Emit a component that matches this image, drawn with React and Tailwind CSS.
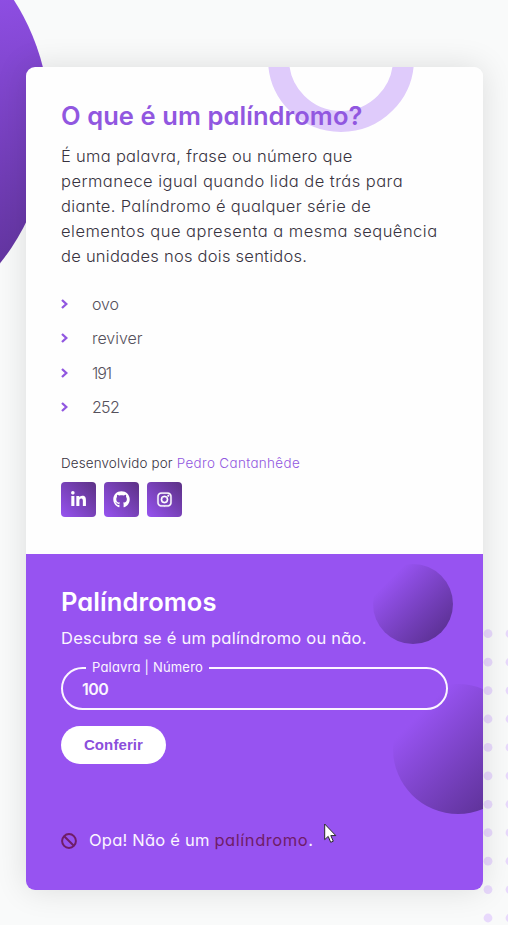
import { BiLogoInstagram } from "react-icons/bi";
import { FaGithub, FaLinkedinIn } from "react-icons/fa";

const examples = [
  { text: "ovo", tracking: "tracking-[-0.1px]" },
  { text: "reviver", tracking: "tracking-[-0.05px]" },
  { text: "191", tracking: "tracking-[-1.1px]" },
  { text: "252", tracking: "tracking-[-0.7px]" },
];

const dotRows = Array.from({ length: 11 }, (_, i) => 633.7 + i * 28.43);

function Backdrop() {
  return (
    <svg className="absolute inset-0" width="508" height="925" aria-hidden="true">
      <defs>
        <linearGradient id="orb" x1="0" y1="-60" x2="60" y2="300" gradientUnits="userSpaceOnUse">
          <stop offset="0" stopColor="#9753f1" />
          <stop offset="1" stopColor="#5c3195" />
        </linearGradient>
      </defs>
      <circle cx="-176" cy="122" r="225.7" fill="url(#orb)" />
      {dotRows.map((y) => (
        <g key={y} fill="#e8d9fc">
          <circle cx="488" cy={y} r="4.4" />
          <circle cx="510" cy={y} r="4.4" />
        </g>
      ))}
    </svg>
  );
}

function Chevron() {
  return (
    <svg className="mr-[24px]" width="7" height="10" viewBox="0 0 7 10" fill="none" stroke="#9157e0" strokeWidth="2.3">
      <path d="M1 1l4.3 4L1 9" />
    </svg>
  );
}

function Blocked() {
  return (
    <svg className="mr-3" width="16" height="16" viewBox="0 0 16 16" fill="none" stroke="#6f1d68" strokeWidth="2">
      <circle cx="8" cy="8" r="6.9" />
      <path d="M3.2 3.2l9.6 9.6" />
    </svg>
  );
}

const tile =
  "grid size-[35px] place-items-center rounded-[4px] bg-linear-45 from-[#9753f1] to-[#5c3185] text-white";

function About() {
  return (
    <section className="relative h-[487px] overflow-hidden bg-[#fefefe] px-[35px] pt-8">
      <div className="absolute left-[242px] top-[-81px] size-[146px] rounded-full border-[21px] border-[#dfcbfb]" />
      <h1 className="relative whitespace-nowrap text-[25.5px] leading-[34px] font-semibold tracking-[0.08px] text-[#9157e0]">
        O que é um palíndromo?
      </h1>
      <p className="relative mt-[11px] text-[16.5px] leading-[25px] font-[350] whitespace-nowrap text-[#38333f]">
        <span className="block tracking-[0.29px]">É uma palavra, frase ou número que</span>
        <span className="block tracking-[0.46px]">permanece igual quando lida de trás para</span>
        <span className="block tracking-[0.32px]">diante. Palíndromo é qualquer série de</span>
        <span className="block tracking-[0.49px]">elementos que apresenta a mesma sequência</span>
        <span className="block tracking-[0.25px]">de unidades nos dois sentidos.</span>
      </p>
      <ul className="mt-[18px] text-[16px] font-[350] text-[#55505b]">
        {examples.map(({ text, tracking }) => (
          <li key={text} className="flex h-[34.33px] items-center">
            <Chevron />
            <span className={tracking}>{text}</span>
          </li>
        ))}
      </ul>
      <p className="mt-[29px] text-[13.4px] leading-5 font-[350] whitespace-nowrap text-[#38333f]">
        <span className="tracking-[0.16px]">Desenvolvido por </span>
        <a className="tracking-[0.37px] text-[#9157e0]">Pedro Cantanhêde</a>
      </p>
      <div className="mt-[9px] flex gap-2">
        <a className={tile}>
          <FaLinkedinIn className="size-[17px]" />
        </a>
        <a className={tile}>
          <FaGithub className="size-[17px]" />
        </a>
        <a className={tile}>
          <BiLogoInstagram className="size-[19px] stroke-white stroke-[0.5]" />
        </a>
      </div>
    </section>
  );
}

function Checker() {
  return (
    <section className="relative h-[336px] overflow-hidden bg-[#9753f1] px-[35px] pt-[31px] text-[#fbf5ff]">
      <div className="absolute left-[347px] top-[10px] size-20 rounded-full bg-linear-135 from-[#9753f1] from-20% to-[#5c3195] to-88%" />
      <div className="absolute left-[367px] top-[130px] size-[130px] rounded-full bg-linear-135 from-[#9753f1] from-22% to-[#5c3195] to-88%" />
      <h2 className="relative text-[25.5px] leading-[34px] font-semibold tracking-[0.08px] text-white">Palíndromos</h2>
      <p className="relative mt-[7px] text-[16.5px] leading-[25px] font-[430] tracking-[0.22px] whitespace-nowrap">
        Descubra se é um palíndromo ou não.
      </p>
      <div className="relative mt-4 flex h-[43px] w-[387px] items-center rounded-[22px] border-2 border-[#fbf5ff] pl-[19px]">
        <label className="absolute left-[23px] top-[-12px] w-[123px] bg-[#9753f1] pl-[6px] text-[13px] leading-5 tracking-[0.2px] whitespace-nowrap">
          Palavra | Número
        </label>
        <span className="text-[16px] font-semibold tracking-[-0.5px]">100</span>
      </div>
      <button className="relative mt-4 block h-[38px] w-[105px] rounded-[19px] bg-white font-['Liberation_Sans',sans-serif] text-[15px] font-bold tracking-[0.1px] text-[#8b4fdb]">
        Conferir
      </button>
      <div className="mt-[64px] flex h-[25px] items-center text-[16.5px] leading-[25px] font-[430]">
        <Blocked />
        <p className="whitespace-nowrap">
          <span className="tracking-[0.22px]">Opa! Não é um </span>
          <span className="tracking-[0.55px] text-[#6f1d68]">palíndromo</span>.
        </p>
      </div>
    </section>
  );
}

export default function App() {
  return (
    <main className="relative h-[925px] w-[508px] overflow-hidden bg-[#f9fafa] pt-[67px] pr-[25px] pl-[26px] font-['Inter',sans-serif] [font-feature-settings:'cv11']">
      <Backdrop />
      <div className="relative h-[823px] overflow-hidden rounded-[9px] shadow-[0_0_32px_rgba(0,0,0,0.12)]">
        <About />
        <Checker />
      </div>
      <svg className="absolute left-[324px] top-[823px]" width="13" height="21" viewBox="0 0 13 21">
        <path d="M.7 1v15.6l3.5-3.2 2.5 5.9 2.6-1.1-2.5-5.6h5z" fill="#fff" stroke="#2b2b2b" />
      </svg>
    </main>
  );
}
